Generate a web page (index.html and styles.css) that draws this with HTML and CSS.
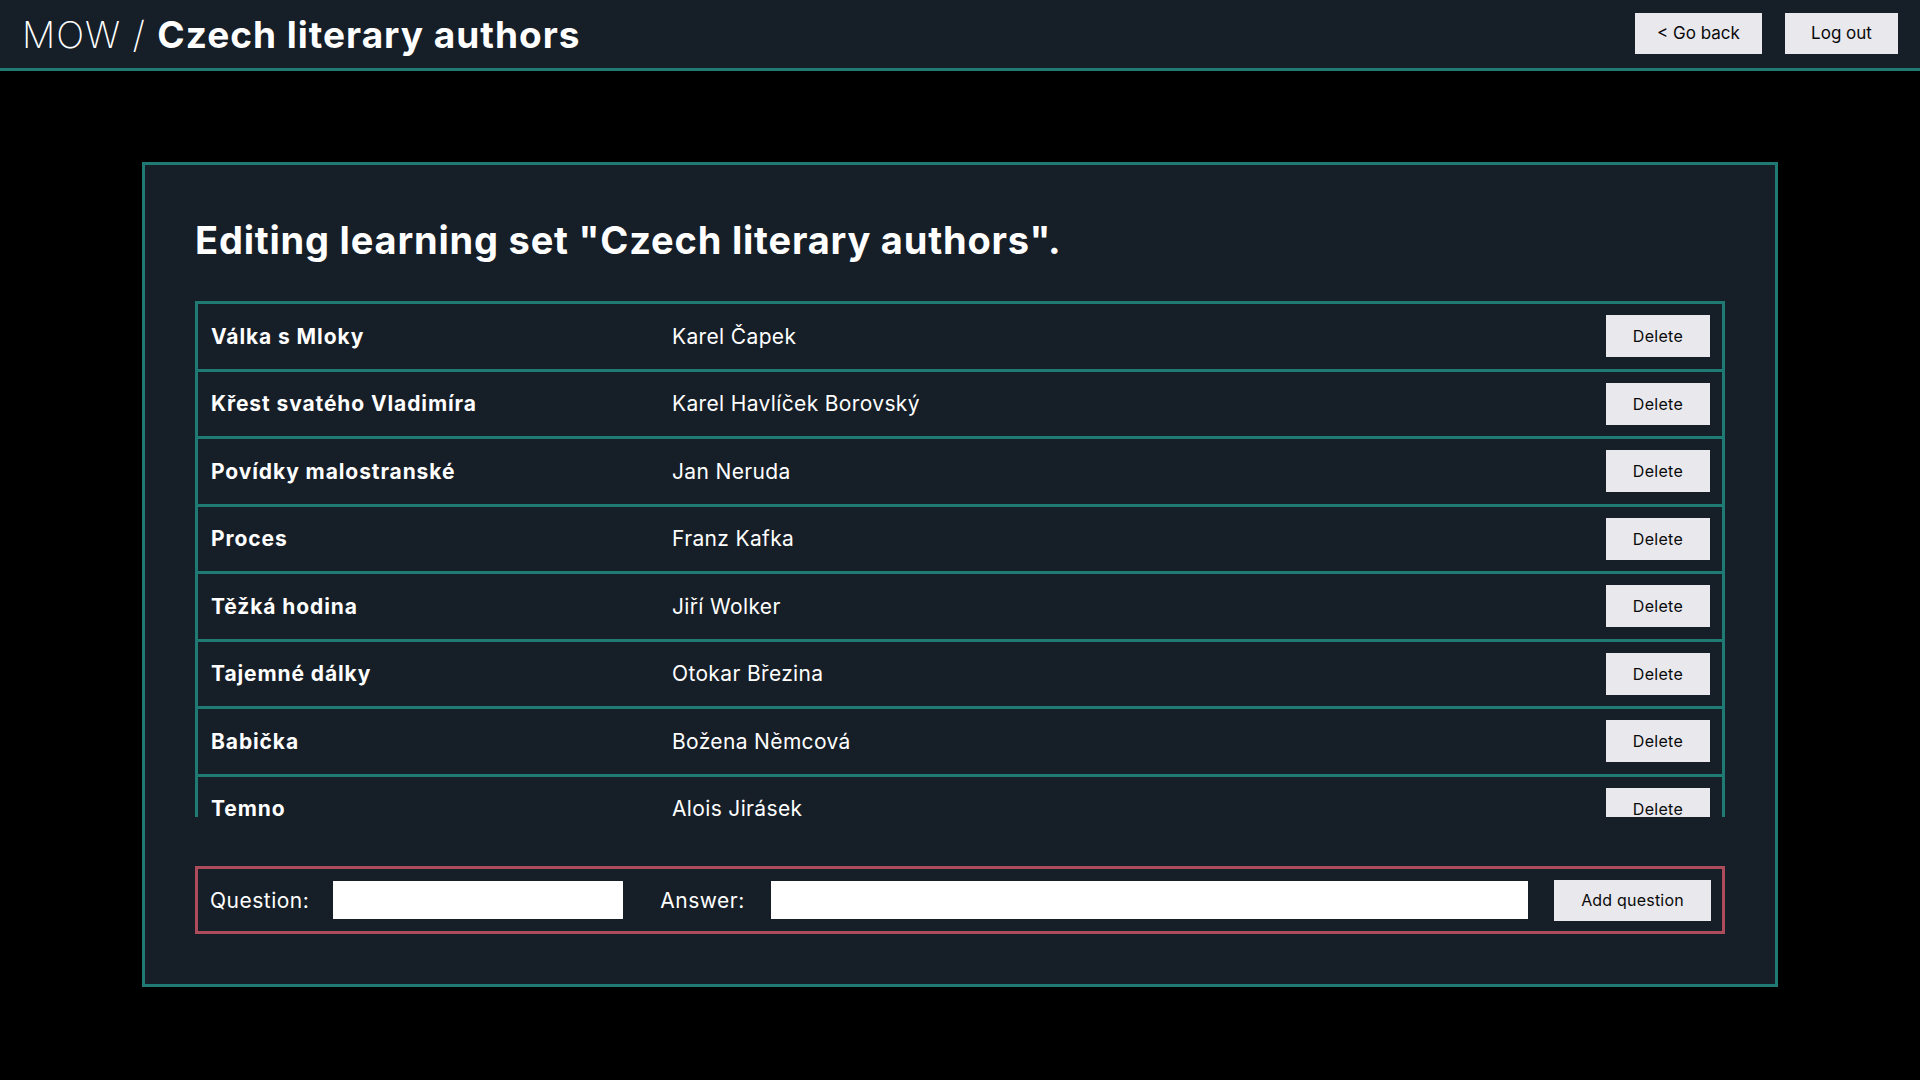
FILE: index.html
```html
<!DOCTYPE html>
<html lang="cs">
<head>
<meta charset="utf-8">
<title>MOW / Czech literary authors</title>
<link rel="stylesheet" href="styles.css">
</head>
<body>
<header class="topbar">
  <h1 class="brand"><span class="brand-app">MOW / </span><span class="brand-set">Czech literary authors</span></h1>
  <nav class="top-actions">
    <button class="btn btn-top btn-back">&lt; Go back</button>
    <button class="btn btn-top btn-logout">Log out</button>
  </nav>
</header>
<main class="panel">
  <h2 class="panel-title">Editing learning set "Czech literary authors".</h2>
  <div class="qa-list">
    <div class="qa-row"><div class="qa-q">Válka s Mloky</div><div class="qa-a">Karel Čapek</div><button class="btn btn-del">Delete</button></div>
    <div class="qa-row"><div class="qa-q">Křest svatého Vladimíra</div><div class="qa-a">Karel Havlíček Borovský</div><button class="btn btn-del">Delete</button></div>
    <div class="qa-row"><div class="qa-q">Povídky malostranské</div><div class="qa-a">Jan Neruda</div><button class="btn btn-del">Delete</button></div>
    <div class="qa-row"><div class="qa-q">Proces</div><div class="qa-a">Franz Kafka</div><button class="btn btn-del">Delete</button></div>
    <div class="qa-row"><div class="qa-q">Těžká hodina</div><div class="qa-a">Jiří Wolker</div><button class="btn btn-del">Delete</button></div>
    <div class="qa-row"><div class="qa-q">Tajemné dálky</div><div class="qa-a">Otokar Březina</div><button class="btn btn-del">Delete</button></div>
    <div class="qa-row"><div class="qa-q">Babička</div><div class="qa-a">Božena Němcová</div><button class="btn btn-del">Delete</button></div>
    <div class="qa-row"><div class="qa-q">Temno</div><div class="qa-a">Alois Jirásek</div><button class="btn btn-del">Delete</button></div>
  </div>
  <form class="add-form">
    <label class="add-label add-label-q" for="q">Question:</label>
    <input class="add-input add-input-q" id="q" type="text">
    <label class="add-label add-label-a" for="a">Answer:</label>
    <input class="add-input add-input-a" id="a" type="text">
    <button class="btn btn-add" type="button">Add question</button>
  </form>
</main>
</body>
</html>
```
FILE: styles.css
```css
* { box-sizing: border-box; }
html, body {
  margin: 0;
  padding: 0;
  background: #000;
  color: #fff;
  font-family: Inter, "Noto Sans", "Liberation Sans", sans-serif;
}
.topbar {
  height: 71px;
  background: #161e27;
  border-bottom: 3px solid #1f7a73;
  display: flex;
  align-items: center;
  justify-content: space-between;
  padding: 0 22px 0 22px;
}
.brand {
  margin: 0;
  font-size: 37px;
  line-height: 1;
  letter-spacing: 1px;
}
.brand-app { font-weight: 200; }
.brand-set { font-weight: 700; }
.top-actions {
  display: flex;
  gap: 23px;
  margin-top: -2px;
}
.btn {
  border: none;
  border-radius: 0;
  background: #e8e8ed;
  color: #0a0a0a;
  font-family: Inter, "Noto Sans", "Liberation Sans", sans-serif;
  font-size: 17px;
  padding: 0;
  cursor: pointer;
}
.btn-top { height: 41px; }
.btn-back { width: 127px; }
.btn-logout { width: 113px; }
.panel {
  margin: 91px 142px 0 142px;
  background: #161e27;
  border: 3px solid #1f7a73;
  padding: 52px 50px 50px 50px;
}
.panel-title {
  margin: 0 0 38px;
  font-size: 38px;
  line-height: 46px;
  font-weight: 700;
  letter-spacing: 0.8px;
}
.qa-list {
  height: 516px;
  overflow-y: auto;
  border: 3px solid #1f7a73;
  border-bottom: none;
}
.qa-list::-webkit-scrollbar { width: 3px; }
.qa-list::-webkit-scrollbar-track { background: transparent; margin-top: 12px; }
.qa-list::-webkit-scrollbar-thumb { background: #3a3d42; }
.qa-row {
  display: grid;
  grid-template-columns: 461px 1fr auto;
  align-items: center;
  height: 67.5px;
  border-bottom: 3px solid #1f7a73;
  padding-right: 12px;
}
.qa-q {
  padding-left: 13px;
  font-size: 21px;
  font-weight: 700;
  letter-spacing: 0.9px;
}
.qa-a {
  padding-left: 13px;
  font-size: 21px;
  font-weight: 400;
  letter-spacing: 0.35px;
}
.btn-del {
  width: 104px;
  height: 42px;
  font-size: 16px;
  letter-spacing: 0.3px;
}
.add-form {
  margin-top: 49px;
  height: 68px;
  border: 3px solid #ab4b5b;
  display: flex;
  align-items: center;
  padding: 0 11px 0 12px;
}
.add-label {
  font-size: 21px;
  white-space: nowrap;
  letter-spacing: 0.5px;
}
.add-input {
  height: 38px;
  border: none;
  border-radius: 0;
  background: #fff;
  outline: none;
  font-size: 18px;
}
.add-input-q { width: 290px; margin-left: 24px; }
.add-label-a { margin-left: 37px; }
.add-input-a { flex: 1; margin-left: 26px; }
.btn-add {
  width: 157px;
  height: 41px;
  margin-left: 26px;
  font-size: 16px;
  letter-spacing: 0.2px;
}
```
